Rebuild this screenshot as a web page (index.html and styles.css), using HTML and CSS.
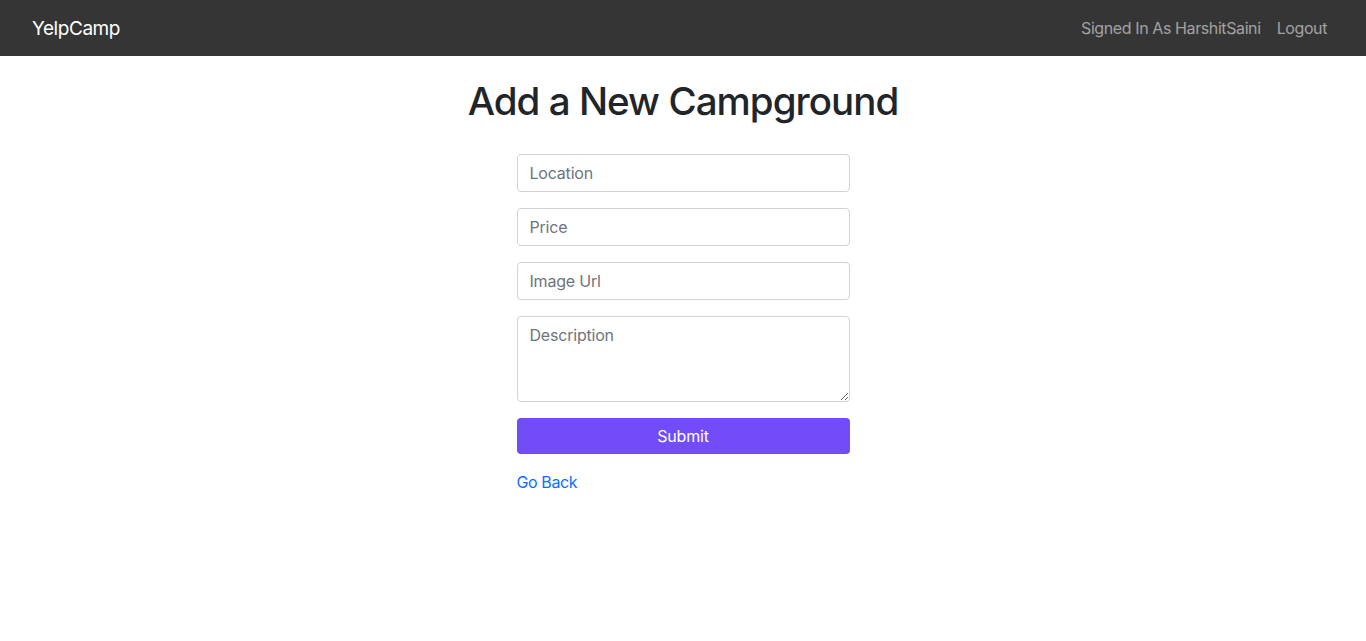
FILE: index.html
```html
<!DOCTYPE html>
<html lang="en">
<head>
<meta charset="utf-8">
<title>YelpCamp</title>
<link rel="stylesheet" href="styles.css">
</head>
<body>
<nav class="navbar">
  <a class="brand" href="#">YelpCamp</a>
  <div class="nav-links">
    <a class="nav-link" href="#">Signed In As HarshitSaini</a>
    <a class="nav-link" href="#">Logout</a>
  </div>
</nav>
<main class="page">
  <h1 class="title">Add a New Campground</h1>
  <form class="form">
    <input class="field" type="text" placeholder="Location">
    <input class="field" type="text" placeholder="Price">
    <input class="field" type="text" placeholder="Image Url">
    <textarea class="field area" placeholder="Description"></textarea>
    <button class="submit" type="button">Submit</button>
    <a class="back" href="#">Go Back</a>
  </form>
</main>
</body>
</html>
```
FILE: styles.css
```css
* { box-sizing: border-box; }
body {
  margin: 0;
  font-family: Inter, "Noto Sans", "Liberation Sans", sans-serif;
  color: #212529;
  background: #fff;
  font-size: 16px;
}
.navbar {
  height: 56px;
  background: #353535;
  display: flex;
  align-items: center;
  justify-content: space-between;
  padding: 0 32px 0 32px;
}
.brand {
  color: #fff;
  text-decoration: none;
  font-size: 19px;
  letter-spacing: -0.45px;
}
.nav-links {
  display: flex;
  gap: 16px;
  margin-right: 7px;
}
.nav-link {
  color: rgba(255,255,255,0.55);
  text-decoration: none;
  font-size: 16px;
  letter-spacing: -0.4px;
}
.page {
  display: flex;
  flex-direction: column;
  align-items: center;
  padding-top: 21px;
}
.title {
  margin: 0;
  font-size: 38.5px;
  font-weight: 500;
  line-height: 48px;
  letter-spacing: -0.95px;
}
.form {
  width: 333px;
  margin-top: 29px;
  display: flex;
  flex-direction: column;
  gap: 16px;
}
.field {
  display: block;
  width: 100%;
  height: 38px;
  padding: 6px 12px;
  font: inherit;
  font-size: 16px;
  letter-spacing: -0.2px;
  color: #212529;
  border: 1px solid #ced4da;
  border-radius: 4px;
  background: #fff;
  outline: none;
}
.field::placeholder { color: #6c757d; }
.area {
  height: 86px;
  padding-top: 8px;
  resize: vertical;
}
.submit {
  height: 36px;
  border: none;
  border-radius: 4px;
  background: #724cf9;
  color: #fff;
  font: inherit;
  font-size: 16px;
  letter-spacing: -0.2px;
  cursor: pointer;
}
.back {
  color: #0d6efd;
  text-decoration: none;
  font-size: 16px;
  line-height: 24px;
  letter-spacing: -0.4px;
  margin-top: 0;
  align-self: flex-start;
}
```
